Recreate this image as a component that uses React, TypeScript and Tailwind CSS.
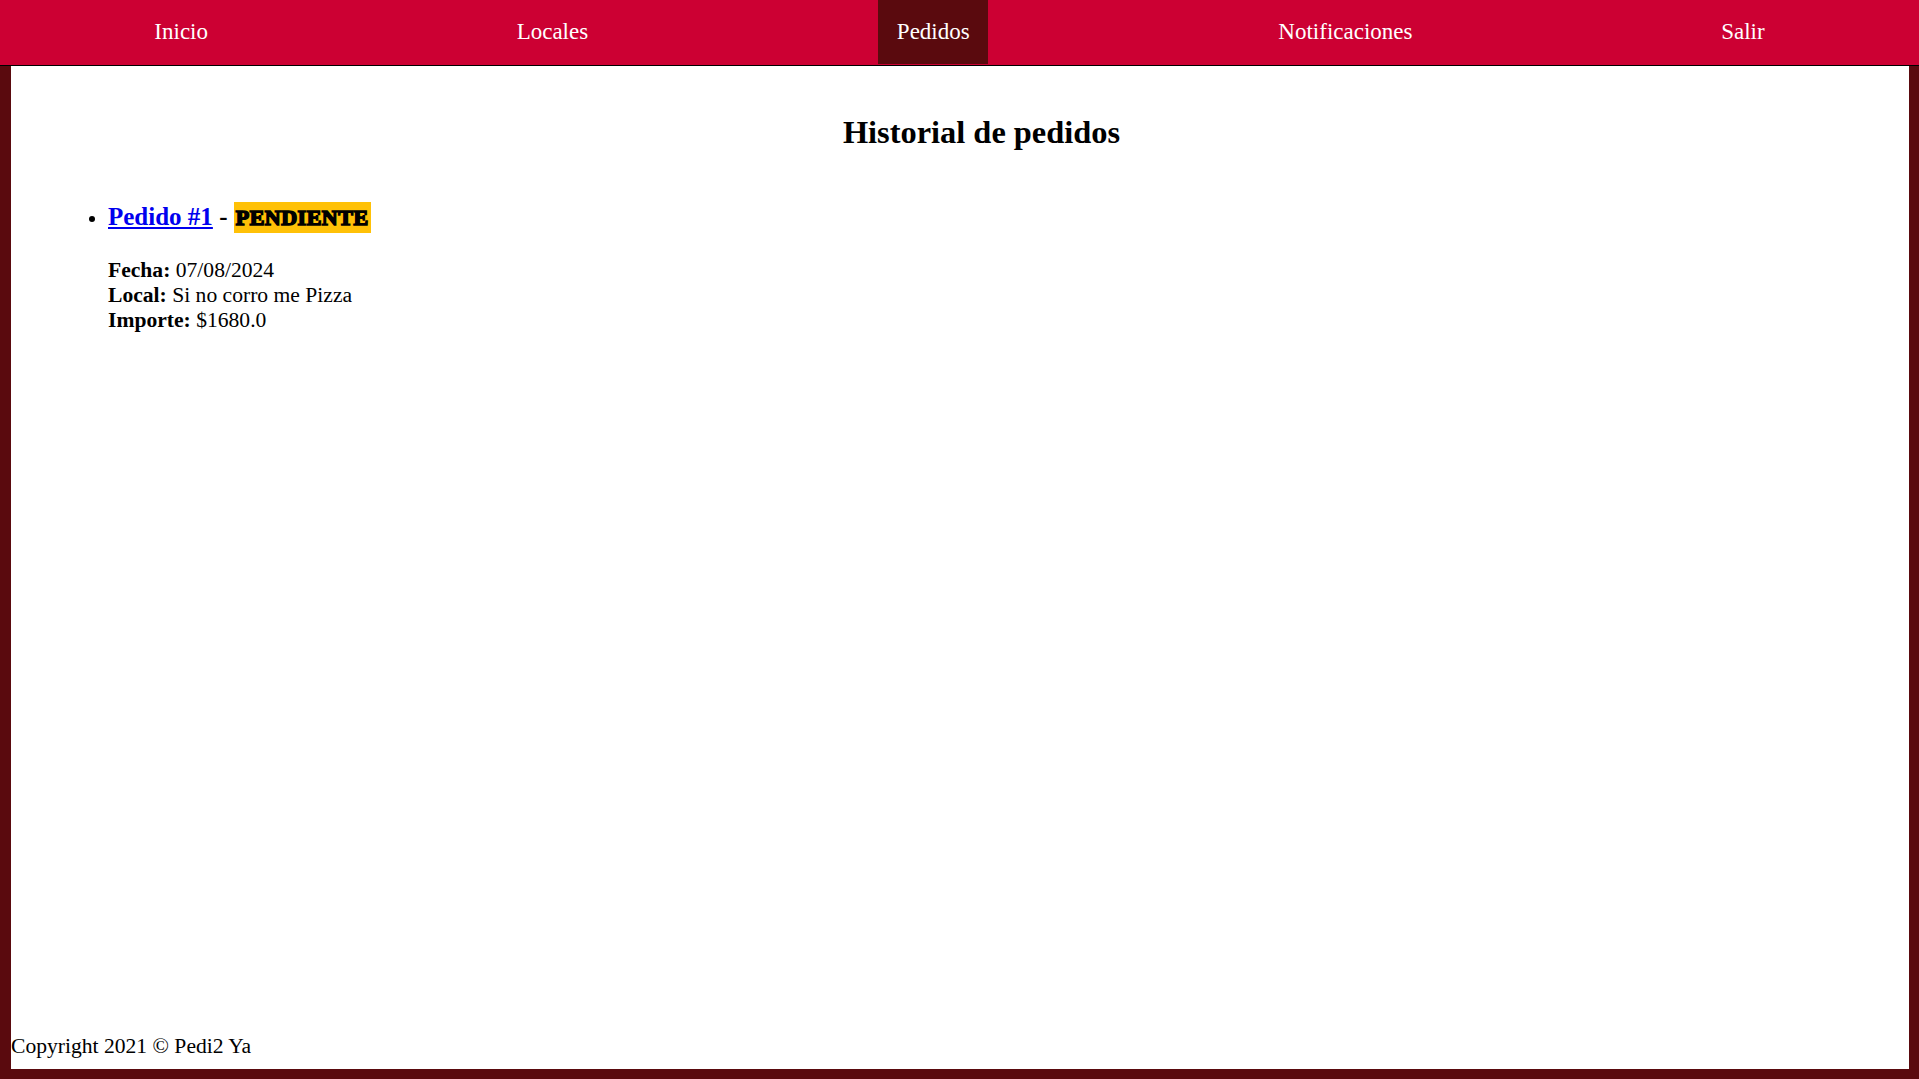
import React from "react";

export default function App() {
  const items = ["Inicio", "Locales", "Pedidos", "Notificaciones", "Salir"];
  return (
    <div className="min-h-[1079px] h-[1079px] flex flex-col bg-[#5a0a0e] font-['Liberation_Serif',serif] text-[21.6px] text-black">
      <nav className="h-[66px] shrink-0 bg-[#cc0033] border-b border-black flex justify-around items-start">
        {items.map((it) => (
          <a
            key={it}
            className={
              it === "Pedidos"
                ? "h-[64px] px-[18.5px] pb-[1px] flex items-center text-white bg-[#5a0a0e] text-[23px] leading-[24px]"
                : "h-[65px] px-[18.5px] pb-[2px] flex items-center text-white text-[23px] leading-[24px]"
            }
          >
            {it}
          </a>
        ))}
      </nav>
      <div className="flex-1 ml-[11px] mr-[10px] mb-[10px] bg-white flex flex-col">
        <main className="flex-1 pl-[43px]">
          <h2 className="mt-[48px] text-center text-[32.4px] font-bold leading-[36px]">Historial de pedidos</h2>
          <ul className="list-disc pl-[54px] mt-[52px]">
            <li>
              <h3 className="text-[25px] font-bold leading-[28px]">
                <a className="text-[#0000ee] underline">Pedido #1</a> -{" "}
                <span className="bg-[#ffc107] px-[2px] py-[3px] text-[22px] [-webkit-text-stroke:1.6px_black] tracking-[0.5px]">PENDIENTE</span>
              </h3>
              <div className="mt-[26px] leading-[25px]">
                <div>
                  <b>Fecha:</b> 07/08/2024
                </div>
                <div>
                  <b>Local:</b> Si no corro me Pizza
                </div>
                <div>
                  <b>Importe:</b> $1680.0
                </div>
              </div>
            </li>
          </ul>
        </main>
        <footer className="pb-[11px] leading-[24px]">Copyright 2021 © Pedi2 Ya</footer>
      </div>
    </div>
  );
}
